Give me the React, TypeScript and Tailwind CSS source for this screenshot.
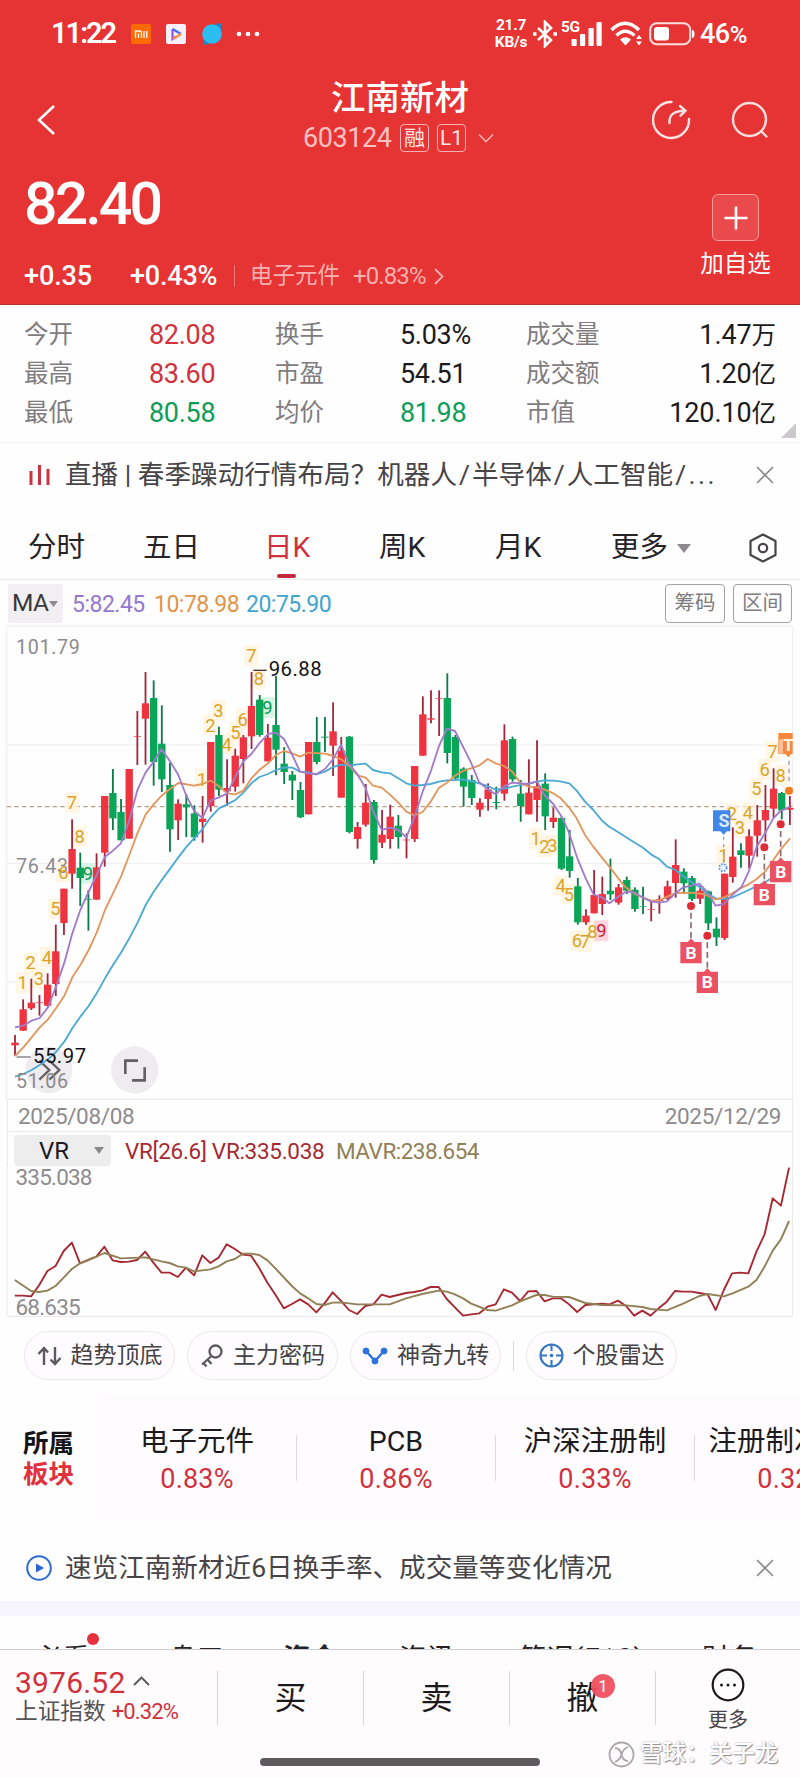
import React from 'react';

type Candle = [number, number, number, number, 'r' | 'g'];

// high, body top, body bottom, low, colour. Three units to one pixel.
const candles: Candle[] = [
    [1245, 1268, 1276, 1307, 'r'], [1138, 1168, 1232, 1232, 'r'], [1076, 1148, 1165, 1170, 'r'], [1125, 1146, 1148, 1187, 'r'],
    [1060, 1094, 1157, 1160, 'r'], [914, 994, 1092, 1128, 'r'], [806, 806, 909, 945, 'r'], [598, 687, 761, 806, 'r'],
    [698, 743, 774, 858, 'g'], [810, 837, 839, 932, 'g'], [700, 742, 839, 839, 'r'], [528, 528, 698, 740, 'r'],
    [447, 519, 595, 630, 'g'], [537, 576, 661, 661, 'g'], [447, 447, 656, 656, 'r'], [273, 348, 350, 435, 'r'],
    [156, 250, 296, 434, 'r'], [181, 234, 426, 497, 'g'], [256, 371, 478, 516, 'g'], [428, 495, 628, 695, 'g'],
    [538, 551, 601, 660, 'r'], [522, 553, 562, 651, 'g'], [556, 580, 652, 662, 'g'], [528, 596, 606, 668, 'r'],
    [366, 366, 558, 575, 'r'], [320, 345, 509, 528, 'g'], [418, 504, 514, 558, 'r'], [386, 407, 500, 515, 'r'],
    [345, 352, 417, 490, 'r'], [156, 258, 349, 387, 'r'], [225, 239, 345, 350, 'g'], [312, 353, 424, 424, 'r'],
    [168, 315, 389, 466, 'g'], [381, 431, 456, 492, 'g'], [453, 464, 482, 540, 'g'], [486, 510, 592, 594, 'g'],
    [366, 366, 583, 583, 'r'], [291, 366, 426, 433, 'g'], [291, 350, 353, 396, 'g'], [247, 334, 377, 468, 'r'],
    [351, 392, 533, 533, 'r'], [348, 350, 636, 640, 'g'], [606, 621, 657, 686, 'r'], [492, 548, 614, 620, 'r'],
    [540, 546, 720, 731, 'g'], [570, 644, 668, 684, 'r'], [554, 590, 657, 686, 'r'], [585, 617, 651, 686, 'g'],
    [640, 659, 661, 715, 'r'], [438, 438, 657, 666, 'r'], [229, 283, 407, 407, 'r'], [211, 295, 299, 310, 'r'],
    [211, 235, 237, 348, 'r'], [160, 234, 399, 430, 'g'], [345, 351, 475, 480, 'g'], [442, 446, 500, 560, 'g'],
    [465, 480, 534, 555, 'g'], [535, 548, 569, 590, 'r'], [490, 508, 537, 572, 'r'], [500, 546, 549, 568, 'g'],
    [313, 361, 521, 542, 'r'], [350, 357, 478, 485, 'g'], [480, 521, 558, 605, 'g'], [418, 518, 583, 583, 'r'],
    [361, 498, 540, 605, 'r'], [460, 491, 589, 630, 'g'], [562, 593, 606, 624, 'r'], [590, 594, 746, 750, 'g'],
    [630, 709, 753, 773, 'g'], [774, 799, 907, 914, 'g'], [868, 887, 907, 914, 'r'], [750, 825, 880, 880, 'r'],
    [770, 822, 852, 885, 'r'], [716, 812, 823, 840, 'g'], [792, 802, 848, 854, 'r'], [770, 780, 812, 822, 'g'],
    [802, 809, 867, 875, 'g'], [800, 858, 860, 882, 'g'], [846, 867, 869, 904, 'r'], [826, 838, 843, 881, 'r'],
    [782, 799, 836, 840, 'r'], [658, 735, 789, 833, 'r'], [745, 755, 790, 822, 'g'], [768, 774, 837, 843, 'g'],
    [796, 812, 836, 852, 'r'], [812, 814, 910, 930, 'g'], [892, 926, 952, 978, 'g'], [761, 761, 954, 960, 'r'],
    [622, 710, 771, 788, 'r'], [670, 691, 705, 743, 'g'], [628, 649, 707, 745, 'r'], [555, 601, 647, 710, 'r'],
    [495, 570, 601, 665, 'r'], [445, 506, 566, 595, 'r'], [516, 519, 571, 598, 'g'], [528, 564, 569, 615, 'r'],
];

const ma5 =
    '45,1222 70,1217 95,1202 119,1194 144,1162 168,1100 193,1028 217,940 241,870 266,815 290,765 315,710 339,692 363,670 388,600 413,508 437,457 461,425 484,388 509,422 535,465 558,525 582,572 607,594 632,541 657,532 682,520 706,470 730,424 754,402 778,370 804,342 828,338 852,357 877,405 900,455 925,460 948,463 975,447 999,418 1023,374 1046,430 1073,464 1097,505 1119,572 1145,630 1170,623 1195,630 1219,652 1243,592 1268,515 1292,455 1317,378 1341,326 1365,333 1388,378 1413,428 1437,486 1463,508 1487,523 1512,499 1537,488 1562,490 1587,492 1611,484 1633,525 1660,552 1685,590 1706,635 1731,712 1757,775 1781,824 1806,832 1828,850 1855,830 1877,815 1902,817 1927,832 1953,844 1977,848 2001,844 2026,820 2048,803 2073,797 2098,791 2121,815 2147,857 2172,852 2197,825 2225,800 2246,755 2270,680 2295,640 2320,595 2341,573 2370,560';
const ma10 =
    '45,1308 70,1282 95,1252 119,1222 144,1198 168,1165 193,1127 217,1072 241,1035 266,990 290,938 315,870 339,820 363,770 388,705 413,638 437,583 461,553 484,528 509,508 535,489 582,497 607,492 632,482 657,499 682,520 706,523 730,512 754,475 778,450 804,430 828,405 852,393 877,400 900,410 925,398 975,401 1000,408 1023,418 1046,435 1073,466 1097,473 1119,497 1145,503 1170,524 1195,548 1219,575 1243,586 1268,576 1292,545 1317,503 1341,488 1365,467 1388,453 1413,445 1437,437 1463,417 1487,430 1512,438 1537,455 1562,490 1587,500 1611,502 1633,508 1660,520 1680,533 1708,563 1730,595 1755,645 1780,680 1806,713 1828,740 1855,775 1877,802 1902,820 1927,832 1953,842 1977,842 2001,830 2026,819 2073,818 2110,822 2147,838 2172,832 2197,820 2225,803 2246,793 2270,777 2295,755 2320,720 2341,690 2370,655';
const ma20 =
    '45,1370 70,1362 95,1350 119,1335 144,1318 168,1296 193,1265 217,1225 241,1190 266,1158 290,1120 315,1075 339,1035 363,998 388,955 413,907 437,855 461,815 484,782 509,748 535,712 558,682 582,655 607,628 632,592 657,565 682,553 706,540 730,518 754,490 778,471 804,462 828,450 852,442 877,443 900,455 925,457 948,463 975,455 999,441 1023,434 1046,437 1073,433 1097,431 1119,450 1145,457 1170,460 1195,475 1219,490 1243,497 1268,495 1292,492 1317,485 1341,481 1365,480 1388,478 1413,483 1437,490 1463,498 1487,509 1512,506 1537,500 1587,490 1611,485 1633,481 1660,482 1680,484 1708,490 1730,512 1755,545 1780,570 1806,602 1828,620 1855,637 1902,667 1927,682 1953,703 1977,717 2001,740 2026,750 2048,767 2073,785 2098,800 2121,820 2147,835 2172,837 2197,832 2220,822 2246,810 2270,798 2295,787 2320,772 2341,755 2370,745';

// x, y, digit, tone
const turns: [number, number, string, 'y' | 'g' | 'r'][] = [
    [68, 1088, '1', 'y'], [92, 1028, '2', 'y'], [117, 1076, '3', 'y'], [141, 1011, '4', 'y'], [166, 865, '5', 'y'],
    [190, 757, '6', 'y'], [216, 548, '7', 'y'], [239, 650, '8', 'y'], [264, 760, '9', 'g'],
    [606, 477, '1', 'y'], [631, 315, '2', 'y'], [655, 271, '3', 'y'], [680, 372, '4', 'y'], [706, 336, '5', 'y'],
    [728, 297, '6', 'y'], [754, 106, '7', 'y'], [777, 176, '8', 'y'], [802, 262, '9', 'g'],
    [1607, 655, '1', 'y'], [1633, 680, '2', 'y'], [1657, 675, '3', 'y'], [1682, 797, '4', 'y'], [1707, 822, '5', 'y'],
    [1731, 962, '6', 'y'], [1755, 965, '7', 'y'], [1777, 935, '8', 'y'], [1804, 932, '9', 'r'],
    [2170, 706, '1', 'y'], [2196, 580, '2', 'y'], [2220, 623, '3', 'y'], [2244, 578, '4', 'y'], [2269, 505, '5', 'y'],
    [2294, 448, '6', 'y'], [2318, 395, '7', 'y'], [2342, 466, '8', 'y'],
];

const tones = {
    y: { text: '#d9a32b', bg: '#fff3dc' },
    g: { text: '#0a9a50', bg: '#c9f2dd' },
    r: { text: '#c9203c', bg: '#fcc9d0' },
};

// buy markers: x, dot y, box top
const buys = [
    [2073, 858, 966],
    [2122, 947, 1055],
    [2293, 682, 792],
    [2342, 613, 723],
];

const vr = [
    617, 617, 619, 585, 543, 528, 483, 458, 520, 510, 500, 470, 511, 516, 515, 510, 485, 518, 548, 548, 561, 533, 556, 496,
    519, 503, 463, 477, 494, 497, 535, 578, 615, 655, 642, 628, 643, 667, 640, 607, 632, 660, 672, 648, 643, 614, 621, 615,
    609, 606, 601, 591, 591, 627, 652, 677, 673, 670, 650, 643, 598, 608, 633, 604, 603, 634, 625, 625, 643, 666, 645, 643,
    641, 643, 632, 648, 677, 662, 677, 655, 635, 603, 605, 605, 609, 613, 660, 600, 550, 548, 550, 485, 433, 325, 347, 233,
];

const mavr = [
    [0, 570], [2, 603], [3, 606], [4, 602], [5, 588], [6, 563], [7, 537], [8, 520], [10, 500], [11, 489], [13, 505], [16, 502],
    [18, 514], [19, 519], [20, 529], [21, 533], [22, 544], [24, 538], [25, 529], [26, 514], [27, 507], [28, 491], [29, 491],
    [30, 495], [31, 511], [32, 536], [34, 588], [35, 610], [36, 625], [37, 642], [38, 645], [39, 638], [40, 637], [42, 643],
    [46, 643], [48, 625], [50, 612], [52, 602], [53, 605], [54, 613], [55, 625], [56, 641], [58, 660], [59, 662], [61, 646],
    [62, 634], [64, 615], [65, 615], [66, 620], [68, 621], [70, 639], [72, 645], [75, 646], [77, 651], [78, 657], [80, 661],
    [82, 641], [84, 618], [85, 612], [87, 619], [88, 611], [90, 590], [91, 570], [92, 530], [93, 482], [94, 448], [95, 393],
];

const stats = [
    ['今开', '82.08', 'text-[#d0313d]', '换手', '5.03%', 'text-[#1c1a1c]', '成交量', '1.47万'],
    ['最高', '83.60', 'text-[#d0313d]', '市盈', '54.51', 'text-[#1c1a1c]', '成交额', '1.20亿'],
    ['最低', '80.58', 'text-[#0d9d58]', '均价', '81.98', 'text-[#0d9d58]', '市值', '120.10亿'],
];

const CloseIcon = () => (
    <svg width="18" height="18" viewBox="0 0 18 18" fill="none" stroke="#8b898c" strokeWidth="1.6">
        <path d="M1 1l16 16M17 1L1 17" />
    </svg>
);

const StatusBar = () => (
    <div className="flex h-[68px] items-center pl-[51px] text-white">
        <span className="w-[80px] text-[29px] font-semibold tracking-[-2px]">11:22</span>
        <svg className="mr-[15px]" width="20" height="20" viewBox="0 0 20 20">
            <rect width="20" height="20" rx="2" fill="#ff6a00" />
            <path d="M4.500 14V7h4q2 0 2 2v5M7.500 9.500V14M13 7v7M15.800 7v7" fill="none" stroke="#fff" strokeWidth="1.300" />
        </svg>
        <svg className="mr-[16px]" width="20" height="20" viewBox="0 0 20 20">
            <rect width="20" height="20" rx="2" fill="#f5f0fb" />
            <path d="M6.500 5v10l3-2.500" fill="none" stroke="#8b4fd8" strokeWidth="2" />
            <path d="M6.500 5L15 10" stroke="#4a6cf0" strokeWidth="2.200" />
            <path d="M15 10l-8 5" stroke="#ff8f3a" strokeWidth="2.200" />
        </svg>
        <svg className="mr-[14px]" width="20" height="22" viewBox="0 0 20 22">
            <path d="M13 0.500h6v8zM1 13.500v8h6z" fill="#1d86c4" />
            <circle cx="10" cy="11" r="9.800" fill="#2bbdf2" />
        </svg>
        <svg width="24" height="6" viewBox="0 0 24 6" fill="#fff">
            <circle cx="3" cy="3" r="2.300" />
            <circle cx="12" cy="3" r="2.300" />
            <circle cx="21" cy="3" r="2.300" />
        </svg>
        <div className="ml-auto w-[34px] text-center text-[15.500px] leading-[17px] font-bold tracking-[-0.3px]">
            <div>21.7</div>
            <div>KB/s</div>
        </div>
        <svg className="ml-[4px]" width="26" height="28" viewBox="0 0 26 28" fill="none" stroke="#fff" strokeWidth="2.600">
            <path d="M6 8l13 12-6 6V2l6 6L6 20" />
            <path d="M1 14h3.500M21.500 14H25" strokeWidth="3.500" />
        </svg>
        <svg className="ml-[3px]" width="42" height="30" viewBox="0 0 42 30" fill="#fff">
            <text x="0" y="13" fontSize="15.500" fontWeight="700" letterSpacing="-0.5">5G</text>
            <rect x="10.500" y="20" width="5.200" height="7" rx="1" />
            <rect x="19" y="15" width="5.200" height="12" rx="1" />
            <rect x="27.500" y="9" width="5.200" height="18" rx="1" />
            <rect x="35.500" y="3" width="5.200" height="24" rx="1" />
        </svg>
        <svg className="ml-[7px]" width="34" height="26" viewBox="0 0 34 26" fill="none" stroke="#fff" strokeWidth="3.400">
            <path d="M1.500 9Q15 -4.500 29 9" />
            <path d="M6.500 14.500Q15 6 24.500 14.500" />
            <path d="M10 18.500q5.500-4.500 11 0l-5.500 6z" fill="#fff" stroke="none" />
            <path d="M26 18l3-4 3 4zM26 20.500l3 4 3-4z" fill="#fff" stroke="none" />
        </svg>
        <svg className="ml-[5px]" width="46" height="24" viewBox="0 0 46 24">
            <rect x="1.200" y="1.200" width="40" height="21" rx="6.500" fill="none" stroke="#fff" strokeWidth="2" strokeOpacity="0.85" />
            <rect x="5" y="5" width="15" height="13.500" rx="3" fill="#fff" />
            <path d="M43 8q2.500 0 2.500 4t-2.500 4z" fill="#fff" />
        </svg>
        <span className="mr-[50px] ml-[5px] w-[50px] text-[27px] font-medium tracking-[-0.5px]">
            46<span className="text-[24px]">%</span>
        </span>
    </div>
);

const Header = () => (
    <header className="h-[305px] border-b border-[#b92f32] bg-[#e63333] text-white">
        <StatusBar />
        <div className="flex h-[92px] items-start">
            <svg className="mt-[36px] ml-[36px]" width="20" height="32" viewBox="0 0 20 32" fill="none" stroke="#fff" strokeWidth="2.600">
                <path d="M18 2L3 16l15 14" />
            </svg>
            <div className="ml-[247px] w-[194px]">
                <div className="mt-[5px] pl-[28px] text-[34.500px] leading-[50px] font-medium">江南新材</div>
                <div className="flex h-[30px] items-center">
                    <span className="w-[97px] text-[27px] leading-[30px] tracking-[-0.4px] text-[#fcc2c2]">603124</span>
                    <span className="flex h-[28px] w-[29px] items-center justify-center rounded-[4px] border border-[#f7b3b3] text-[21px] leading-none text-[#ffe6e6]">融</span>
                    <span className="ml-[8px] flex h-[28px] w-[29px] items-center justify-center rounded-[4px] border border-[#f7b3b3] text-[21px] leading-none text-[#ffe6e6]">L1</span>
                    <svg className="ml-[12px]" width="16" height="10" viewBox="0 0 16 10" fill="none" stroke="#f9b0b0" strokeWidth="1.600">
                        <path d="M1 1.500l7 7 7-7" />
                    </svg>
                </div>
            </div>
            {/* share: open ring with an upright bent arrow */}
            <svg className="mt-[32px] ml-[154px]" width="40" height="40" viewBox="0 0 40 40" fill="none" stroke="#ffe3e3" strokeWidth="2.400" strokeLinecap="round">
                <path d="M20.500 2A18 18 0 1 0 38 19" />
                <path d="M18.500 23q-1-12 15-12.300M29 6l5.500 4.700-5 5" />
            </svg>
            <svg className="mt-[33px] ml-[40px]" width="40" height="40" viewBox="0 0 40 40" fill="none" stroke="#ffdcdc" strokeWidth="2.400" strokeLinecap="round">
                <circle cx="18.500" cy="18.500" r="16.500" />
                <path d="M30.500 30.500l5 5" />
            </svg>
        </div>
        <div className="flex justify-between pr-[29px] pl-[24px]">
            <div>
                <div className="mt-[10px] h-[70px] text-[59px] leading-[68px] font-medium tracking-[-2.900px]">82.40</div>
                <div className="mt-[20px] flex h-[32px] items-center">
                    <span className="w-[106px] text-[27px] font-medium tracking-[-0.1px]">+0.35</span>
                    <span className="w-[104px] text-[27px] font-medium tracking-[-0.2px]">+0.43%</span>
                    <span className="h-[22px] w-px bg-[#f07a7a]" />
                    <span className="ml-[15px] w-[103px] text-[22.500px] text-[#f9b0b0]">电子元件</span>
                    <span className="text-[24px] tracking-[-0.9px] text-[#f9b0b0]">+0.83%</span>
                    <svg className="ml-[8px]" width="10" height="17" viewBox="0 0 10 17" fill="none" stroke="#f9b0b0" strokeWidth="1.800">
                        <path d="M1 1l7.500 7.500L1 16" />
                    </svg>
                </div>
            </div>
            <div className="flex w-[71px] flex-col items-center pt-[34px]">
                <div className="flex h-[47px] w-[47px] items-center justify-center rounded-[6px] border border-[#f59a9a] bg-[#ea4a4c]">
                    <svg width="24" height="24" viewBox="0 0 24 24" stroke="#fff" strokeWidth="2.600">
                        <path d="M12 0.500v23M0.500 12h23" />
                    </svg>
                </div>
                <div className="mt-[8px] text-[23.500px] leading-[30px] whitespace-nowrap">加自选</div>
            </div>
        </div>
    </header>
);

const KChart = () => (
    <svg className="block" width="800" height="480" viewBox="0 0 2400 1440">
        <g stroke="#efedf0" strokeWidth="3" fill="none">
            <path d="M20 18H2378V1440M20 18V1440M20 375H2378M20 730H2378M20 1086H2378" />
            <path d="M20 1438H2378" stroke="#e6e4e7" />
        </g>
        <path d="M20 560H2378" stroke="#b5a184" strokeWidth="4" strokeDasharray="13 10" />

        <circle cx="147" cy="1350" r="70" fill="#efecef" />
        <circle cx="404" cy="1350" r="71" fill="#efecef" />
        <g fill="none" stroke="#636163" strokeWidth="7">
            <path d="M118 1322l30 28-30 29M148 1322l30 28-30 29" />
            <path d="M376 1362V1322H414M434 1342V1381H396" strokeWidth="8" />
        </g>

        {turns.map(([x, y, n, tone], i) => (
            <rect key={i} x={x - 21} y={y - 31} width="42" height="62" fill={tones[tone].bg} opacity="0.75" />
        ))}

        <g fontSize="59" letterSpacing="2" fill="#8d8b8e">
            <text x="48" y="101">101.79</text>
            <text x="48" y="760">76.43</text>
        </g>

        {candles.map(([high, top, bottom, low, c], i) => {
            const x = 45 + i * 24.47;
            return (
                <g key={i}>
                    <path d={`M${x} ${high}V${low}`} stroke={c === 'r' ? '#a3283c' : '#0c7a48'} strokeWidth="5.500" />
                    <rect x={x - 11} y={top} width="22" height={bottom - top} fill={c === 'r' ? '#ee3440' : '#0ba55a'} />
                </g>
            );
        })}

        <g fill="none" strokeWidth="5.500" strokeLinejoin="round">
            <polyline points={ma20} stroke="#4ba9d3" />
            <polyline points={ma10} stroke="#e3965c" />
            <polyline points={ma5} stroke="#a07bcb" />
        </g>

        <g fontSize="55" textAnchor="middle">
            {turns.map(([x, y, n, tone], i) => (
                <text key={i} x={x} y={y + 20} fill={tones[tone].text}>{n}</text>
            ))}
        </g>

        {/* highest and lowest price */}
        <path d="M760 151H800" stroke="#4b3438" strokeWidth="4" />
        <path d="M50 1311H92" stroke="#7d7b7e" strokeWidth="4" />
        <text x="48" y="1403" fontSize="59" letterSpacing="2" fill="#8d8b8e">51.06</text>
        <g fontSize="61" letterSpacing="1.500" fill="#141214">
            <text x="806" y="168">96.88</text>
            <text x="99" y="1329">55.97</text>
        </g>

        {/* trade points */}
        {buys.map(([x, dot, box], i) => (
            <g key={i}>
                <path d={`M${x} ${dot + 20}V${box - 8}`} stroke="#8b6b72" strokeWidth="5" strokeDasharray="18 11" />
                <circle cx={x} cy={dot} r="12" fill="#e02b38" />
                <path d={`M${x - 32} ${box}h22l10-11 10 11h22v64h-64z`} fill="#ea5261" />
                <text x={x} y={box + 50} fontSize="52" fontWeight="700" fill="#fff" textAnchor="middle">B</text>
            </g>
        ))}
        <path d="M2139 571h52v63h-10l-10 10-10-10h-22z" fill="#4187ea" />
        <text x="2172" y="622" fontSize="54" fontWeight="700" fill="#dcebff" textAnchor="middle">S</text>
        <path d="M2171 650V730" stroke="#8aa0bf" strokeWidth="4" strokeDasharray="9 14" />
        <circle cx="2169" cy="743" r="11" fill="#e6f1ff" stroke="#5b93d6" strokeWidth="5" strokeDasharray="5 4" />
        <path d="M2335 339h43v63h-4l-9 10-9-10h-21z" fill="#f5883c" />
        <rect x="2337" y="358" width="12" height="43" fill="#fbc095" />
        <text x="2365" y="392" fontSize="50" fontWeight="700" fill="#fff3e6" textAnchor="middle">T</text>
        <path d="M2367 422V492" stroke="#a3989a" strokeWidth="4" strokeDasharray="14 10" />
        <circle cx="2367" cy="512" r="12" fill="#f37a1f" />
    </svg>
);

const VrChart = () => (
    <svg className="block" width="800" height="154" viewBox="0 0 800 154">
        <path d="M7 0V152.500H792.500V0" fill="none" stroke="#ebe9ec" />
        <g fontSize="22.500" letterSpacing="-0.8" fill="#8d8b8e">
            <text x="15.500" y="21">335.038</text>
            <text x="15.500" y="150.500">68.635</text>
        </g>
        <g fill="none" strokeWidth="1.900" strokeLinejoin="round">
            <polyline stroke="#a62932" points={vr.map((v, i) => `${14.8 + i * 8.15},${v / 3 - 74}`).join(' ')} />
            <polyline stroke="#917f55" points={mavr.map(([i, v]) => `${14.8 + i * 8.15},${v / 3 - 74}`).join(' ')} />
        </g>
    </svg>
);

const Pill = ({ icon, label }: { icon: React.ReactNode; label: string }) => (
    <div className="flex h-[49px] w-[151px] items-center justify-center gap-[9px] rounded-full border border-[#ece8ec] bg-[#fefcfe] text-[23px] text-[#444245]">
        {icon}
        <span className="pt-[2px] whitespace-nowrap">{label}</span>
    </div>
);

const Sector = ({ name, value }: { name: string; value: string }) => (
    <div className="w-[198px] shrink-0 text-center">
        <div className="text-[28.500px] leading-[38px] whitespace-nowrap text-[#1c1a1c]">{name}</div>
        <div className="text-[27px] leading-[36px] tracking-[0.2px] text-[#d0313d]">{value}</div>
    </div>
);

const App: React.FC = () => {
    return (
        <div className="h-[1778px] w-[800px] overflow-hidden bg-[#fefefe] font-['Roboto','Noto_Sans_CJK_SC',sans-serif]">
            <Header />

            {/* quote table */}
            <div className="relative h-[138px] border-b border-[#f1eff2] pt-[11px]">
                {stats.map(([a, av, ac, b, bv, bc, c, cv]) => (
                    <div key={a} className="flex h-[39px] items-center pl-[24px] text-[24.500px] text-[#7e7c7f]">
                        <span className="w-[125px]">{a}</span>
                        <span className={`w-[126px] text-[27px] tracking-[-0.3px] ${ac}`}>{av}</span>
                        <span className="w-[125px]">{b}</span>
                        <span className={`w-[126px] text-[27px] tracking-[-0.3px] ${bc}`}>{bv}</span>
                        <span>{c}</span>
                        <span className="mr-[24px] ml-auto tracking-[-0.1px] text-[#1c1a1c]">
                            <span className="text-[27px]">{cv.slice(0, -1)}</span>
                            {cv.slice(-1)}
                        </span>
                    </div>
                ))}
                <svg className="absolute right-[4px] bottom-[4px]" width="15" height="15" viewBox="0 0 15 15">
                    <path d="M15 0V15H0z" fill="#cbc9cc" />
                </svg>
            </div>

            {/* live banner */}
            <div className="flex h-[64px] items-center pr-[26px] pl-[29px]">
                <svg className="mr-[15px]" width="21" height="20" viewBox="0 0 21 20" stroke="#cc3340" strokeWidth="3">
                    <path d="M2 6v14M10.500 0v20M19 4v16" />
                </svg>
                <span className="text-[26.600px] whitespace-nowrap text-[#464447]">
                    直播 | 春季躁动行情布局？机器人
                    <span className="mx-[2px]">/</span>半导体
                    <span className="mx-[2px]">/</span>人工智能
                    <span className="mx-[2px] tracking-[2.500px]">/...</span>
                </span>
                <span className="ml-auto"><CloseIcon /></span>
            </div>

            {/* period tabs */}
            <div className="flex h-[73px] items-center border-b border-[#eceaed] pt-[10px] pl-[28px] text-[28.500px] text-[#252326]">
                <span className="w-[115px]">分时</span>
                <span className="w-[121px]">五日</span>
                <span className="relative w-[115px] text-[#d0313d]">
                    日K
                    <span className="absolute bottom-[-9px] left-[13px] h-[4px] w-[19px] rounded-full bg-[#c22b3c]" />
                </span>
                <span className="w-[116px]">周K</span>
                <span className="w-[116px]">月K</span>
                <span>更多</span>
                <svg className="ml-[9px]" width="14" height="9" viewBox="0 0 14 9"><path d="M0 0h14L7 9z" fill="#8b898c" /></svg>
                <svg className="ml-[58px]" width="28" height="30" viewBox="0 0 28 30" fill="none" stroke="#464447" strokeWidth="2.200">
                    <path d="M14 1.500L26.500 8v14L14 28.500 1.500 22V8z" strokeLinejoin="round" />
                    <circle cx="14" cy="15" r="4.200" />
                </svg>
            </div>

            {/* moving averages */}
            <div className="flex h-[43px] items-end pl-[8px]">
                <div className="flex h-[39px] w-[55px] items-center rounded-[3px] bg-[#f1eff1] pl-[4px] text-[24.500px] tracking-[-0.6px] text-[#3a383b]">
                    MA
                    <svg className="ml-[1px]" width="9" height="6" viewBox="0 0 9 6"><path d="M0 0h9L4.500 6z" fill="#8b898c" /></svg>
                </div>
                <div className="ml-[9px] flex h-[36px] items-center text-[23px] tracking-[-0.5px]">
                    <span className="w-[82px] text-[#9678cf]">5:82.45</span>
                    <span className="w-[92px] text-[#e19447]">10:78.98</span>
                    <span className="text-[#41a4cf]">20:75.90</span>
                </div>
                <div className="mr-[8px] ml-auto flex gap-[8px]">
                    <span className="flex h-[39px] w-[60px] items-center justify-center rounded-[4px] border border-[#a3a1a4] text-[20.500px] text-[#7e7c7f]">筹码</span>
                    <span className="flex h-[39px] w-[59px] items-center justify-center rounded-[4px] border border-[#a3a1a4] text-[20.500px] text-[#7e7c7f]">区间</span>
                </div>
            </div>

            <div className="mt-[-3px]">
                <KChart />
            </div>

            <div className="mx-[7px] flex h-[32px] items-center justify-between border-x border-b border-[#ebe9ec] pt-[3px] pr-[11px] pl-[10px] text-[22.500px] tracking-[-0.35px] text-[#8d8b8e]">
                <span>2025/08/08</span>
                <span>2025/12/29</span>
            </div>
            <div className="mx-[7px] flex h-[34px] items-end border-x border-[#ebe9ec] pl-[6px]">
                <div className="flex h-[31px] w-[97px] items-center justify-between rounded-[4px] bg-[#ededee] pr-[7px] pl-[25px] text-[24px] text-[#1c1a1c]">
                    VR
                    <svg width="10" height="7" viewBox="0 0 10 7"><path d="M0 0h10L5 7z" fill="#8b898c" /></svg>
                </div>
                <span className="ml-[14px] w-[211px] text-[22.500px] leading-[29px] tracking-[-0.3px] whitespace-nowrap text-[#a62932]">VR[26.6] VR:335.038</span>
                <span className="text-[22.500px] leading-[29px] tracking-[-0.5px] text-[#917f55]">MAVR:238.654</span>
            </div>
            <div className="mt-[-2px]">
                <VrChart />
            </div>

            {/* shortcuts */}
            <div className="mt-[13px] flex items-center pl-[24px]">
                <Pill
                    label="趋势顶底"
                    icon={
                        <svg width="25" height="20" viewBox="0 0 25 20" fill="none" stroke="#5c5a5d" strokeWidth="2.400">
                            <path d="M7 19V2M1.500 8L7 2l4 4.500M18 1v17M13.500 13.500l4.500 4.500 5.500-6" />
                        </svg>
                    }
                />
                <span className="w-[12px]" />
                <Pill
                    label="主力密码"
                    icon={
                        <svg width="24" height="24" viewBox="0 0 24 24" fill="none" stroke="#5c5a5d" strokeWidth="2.300">
                            <circle cx="15.500" cy="7.500" r="6" />
                            <path d="M11.500 12L2 20.500M7.500 15.500l4 4.500M3.500 19l3 3.500" />
                        </svg>
                    }
                />
                <span className="w-[12px]" />
                <Pill
                    label="神奇九转"
                    icon={
                        <svg width="26" height="18" viewBox="0 0 26 18" fill="#2b72dc" stroke="#2b72dc">
                            <path d="M4 4l9 10 9-10" fill="none" strokeWidth="2.400" />
                            <circle cx="4" cy="4" r="3" />
                            <circle cx="13" cy="14" r="3" />
                            <circle cx="22" cy="4" r="3" />
                        </svg>
                    }
                />
                <span className="mr-[12px] ml-[12px] h-[30px] w-px bg-[#d8d6d9]" />
                <Pill
                    label="个股雷达"
                    icon={
                        <svg width="25" height="25" viewBox="0 0 25 25" fill="none" stroke="#3577c2" strokeWidth="2.100">
                            <circle cx="12.500" cy="12.500" r="11" />
                            <path d="M12.500 1v7M12.500 17v7M1 12.500h7M17 12.500h7" />
                            <circle cx="12.500" cy="12.500" r="1.800" fill="#3577c2" stroke="none" />
                        </svg>
                    }
                />
            </div>

            {/* sectors */}
            <div className="mt-[14px] flex h-[125px] items-center">
                <div className="w-[98px] shrink-0 pt-[4px] pl-[23px] text-[25.500px] leading-[31px] font-bold text-[#151315]">
                    <div>所属</div>
                    <div className="text-[#e0323c]">板块</div>
                </div>
                <div className="flex h-full flex-1 items-center overflow-hidden bg-[#fefcfe] pt-[6px]">
                    <Sector name="电子元件" value="0.83%" />
                    <span className="mb-[4px] h-[46px] w-px shrink-0 bg-[#dddbde]" />
                    <Sector name="PCB" value="0.86%" />
                    <span className="mb-[4px] h-[46px] w-px shrink-0 bg-[#dddbde]" />
                    <Sector name="沪深注册制" value="0.33%" />
                    <span className="mb-[4px] h-[46px] w-px shrink-0 bg-[#dddbde]" />
                    <Sector name="注册制次新股" value="0.32%" />
                </div>
            </div>

            <div className="mt-[16px] flex h-[66px] items-center pr-[26px] pl-[26px]">
                <svg className="mr-[13px]" width="26" height="26" viewBox="0 0 26 26" fill="none" stroke="#2c6acb" strokeWidth="2">
                    <circle cx="13" cy="13" r="11.800" />
                    <path d="M10 8.500l8 4.500-8 4.500z" fill="#2266d4" stroke="none" />
                </svg>
                <span className="text-[26.600px] whitespace-nowrap text-[#464447]">速览江南新材近6日换手率、成交量等变化情况</span>
                <span className="ml-auto"><CloseIcon /></span>
            </div>
            <div className="h-[15px] bg-[#f6f5fd]" />

            {/* detail tabs, cut off by the trade bar */}
            <div className="flex h-[33px] items-start overflow-hidden pt-[25px] pl-[35px] text-[27.500px] leading-[36px] whitespace-nowrap text-[#252326]">
                <span className="relative w-[134px]">
                    必看
                    <span className="absolute top-[-8px] left-[52px] h-[12px] w-[12px] rounded-full bg-[#e5313e]" />
                </span>
                <span className="w-[114px]">盘口</span>
                <span className="w-[116px] font-bold">资金</span>
                <span className="w-[120px]">资讯</span>
                <span className="w-[183px]">简况<span className="tracking-[1px]">(F10)</span></span>
                <span>财务</span>
            </div>

            {/* trade bar */}
            <div className="h-[130px] border-t border-[#cfcdd0] bg-[#fefcfd]">
                <div className="flex h-[96px] items-center text-[32px] text-[#1c1a1c]">
                    <div className="mb-[5px] ml-[15px] w-[202px] shrink-0">
                        <div className="flex items-center text-[30px] leading-[31px] tracking-[0.2px] text-[#d0313d]">
                            3976.52
                            <svg className="mb-[3px] ml-[8px]" width="17" height="10" viewBox="0 0 17 10" fill="none" stroke="#555356" strokeWidth="1.800">
                                <path d="M1 9l7.500-7.500L16 9" />
                            </svg>
                        </div>
                        <div className="flex items-center text-[22.700px] leading-[27px] whitespace-nowrap text-[#555356]">
                            上证指数
                            <span className="ml-[6px] text-[22px] tracking-[-0.9px] text-[#d0313d]">+0.32%</span>
                        </div>
                    </div>
                    <span className="h-[54px] w-px bg-[#d8d6d9]" />
                    <span className="w-[145px] text-center">买</span>
                    <span className="h-[54px] w-px bg-[#d8d6d9]" />
                    <span className="w-[145px] text-center">卖</span>
                    <span className="h-[54px] w-px bg-[#d8d6d9]" />
                    <span className="relative w-[145px] text-center">
                        撤
                        <span className="absolute top-0 left-[81px] flex h-[24px] w-[24px] items-center justify-center rounded-full bg-[#f05060]/95 text-[17px] leading-none text-white">1</span>
                    </span>
                    <span className="h-[54px] w-px bg-[#d8d6d9]" />
                    <div className="flex flex-1 flex-col items-center pt-[7px] text-[20px] leading-[30px] text-[#464447]">
                        <svg className="mb-[3px]" width="34" height="34" viewBox="0 0 34 34" fill="#1c1a1c">
                            <circle cx="17" cy="17" r="15.300" fill="none" stroke="#1c1a1c" strokeWidth="2.200" />
                            <circle cx="10.500" cy="17" r="1.500" />
                            <circle cx="17" cy="17" r="1.500" />
                            <circle cx="23.500" cy="17" r="1.500" />
                        </svg>
                        更多
                    </div>
                </div>
                <div className="flex">
                    <span className="mt-[12px] ml-[260px] h-[8px] w-[280px] rounded-full bg-[#5c5a5c]" />
                    <div className="mt-[-8px] ml-[68px] flex items-center text-[23px] leading-[32px] font-medium text-white [text-shadow:1px_1px_1px_#8f8d90,0_0_2px_#a5a3a6]">
                        <svg className="mr-[5px]" width="27" height="27" viewBox="0 0 27 27" fill="none" stroke="#a9a7aa" strokeWidth="1.800">
                            <circle cx="13.500" cy="13.500" r="12" />
                            <path d="M7 7q5 0 6.500 6.500T20 20M20 6q-5 2-6.500 7.500T7 21" />
                        </svg>
                        雪球：关子龙
                    </div>
                </div>
            </div>
        </div>
    );
};

export default App;
